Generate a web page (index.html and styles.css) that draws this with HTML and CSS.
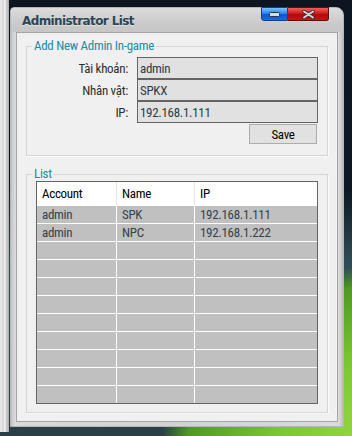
FILE: index.html
```html
<!DOCTYPE html>
<html lang="vi">
<head>
    <meta charset="UTF-8">
    <meta name="viewport" content="width=device-width, initial-scale=1.0">
    <title>Administrator List</title>
    <link rel="stylesheet" href="styles.css">
</head>
<body>
    <div class="desktop">
        <div class="otherwin"></div>

        <div class="window">
            <div class="titlebar">
                <span class="title">Administrator List</span>
                <div class="caption-btns">
                    <span class="cbtn min">
                        <svg width="11" height="5" viewBox="0 0 11 5"><rect x="0.5" y="0.5" width="10" height="4" rx="1" fill="#d8dde4" stroke="#28344a"/></svg>
                    </span>
                    <span class="cbtn close">
                        <svg width="13" height="9" viewBox="0 0 13 9">
                            <path d="M2 1.5 L11 7.5 M11 1.5 L2 7.5" stroke="#3a2a2a" stroke-width="3.6" stroke-linecap="round"/>
                            <path d="M2 1.5 L11 7.5 M11 1.5 L2 7.5" stroke="#d6d6d6" stroke-width="2" stroke-linecap="round"/>
                        </svg>
                    </span>
                </div>
            </div>

            <div class="client">
                <!-- Form them admin -->
                <fieldset class="group add-group">
                    <legend>Add New Admin In-game</legend>
                    <div class="form-grid">
                        <label for="account">Tài khoản:</label>
                        <input type="text" id="account" value="admin">
                        <label for="character">Nhân vật:</label>
                        <input type="text" id="character" value="SPKX">
                        <label for="ip">IP:</label>
                        <input type="text" id="ip" value="192.168.1.111">
                    </div>
                    <div class="actions">
                        <button type="button" class="save-btn">Save</button>
                    </div>
                </fieldset>

                <!-- Danh sach admin -->
                <fieldset class="group list-group">
                    <legend>List</legend>
                    <table class="admin-table">
                        <colgroup>
                            <col class="col-account">
                            <col class="col-name">
                            <col class="col-ip">
                        </colgroup>
                        <thead>
                            <tr>
                                <th>Account</th>
                                <th>Name</th>
                                <th>IP</th>
                            </tr>
                        </thead>
                        <tbody>
                            <tr><td>admin</td><td>SPK</td><td>192.168.1.111</td></tr>
                            <tr><td>admin</td><td>NPC</td><td>192.168.1.222</td></tr>
                            <tr><td>&nbsp;</td><td>&nbsp;</td><td>&nbsp;</td></tr>
                            <tr><td>&nbsp;</td><td>&nbsp;</td><td>&nbsp;</td></tr>
                            <tr><td>&nbsp;</td><td>&nbsp;</td><td>&nbsp;</td></tr>
                            <tr><td>&nbsp;</td><td>&nbsp;</td><td>&nbsp;</td></tr>
                            <tr><td>&nbsp;</td><td>&nbsp;</td><td>&nbsp;</td></tr>
                            <tr><td>&nbsp;</td><td>&nbsp;</td><td>&nbsp;</td></tr>
                            <tr><td>&nbsp;</td><td>&nbsp;</td><td>&nbsp;</td></tr>
                            <tr><td>&nbsp;</td><td>&nbsp;</td><td>&nbsp;</td></tr>
                            <tr><td>&nbsp;</td><td>&nbsp;</td><td>&nbsp;</td></tr>
                        </tbody>
                    </table>
                </fieldset>
            </div>
        </div>
    </div>
</body>
</html>
```

FILE: styles.css
```css
/* nen desktop */
body {
    margin: 0;
    font-family: Roboto, "Liberation Sans", sans-serif;
    font-stretch: 75%;
    font-size: 13px;
    letter-spacing: -0.3px;
}

.desktop {
    display: flex;
    align-items: flex-start;
    width: 352px;
    height: 436px;
    overflow: hidden;
    background:
        radial-gradient(ellipse 260px 200px at 420px 460px, #a6e24c 0, #7cc832 55%, #4e9a22 90%, rgba(60, 120, 40, 0) 100%),
        linear-gradient(#0c1520 0, #0d1722 190px, #2f4c56 262px, #2a3f47 100%);
}

/* cua so khac phia sau */
.otherwin {
    width: 9px;
    height: 432px;
    background: linear-gradient(to right, #e6e6e6 0, #e6e6e6 2px, #cfcfcf 3px, #f6f6f6 5px, #b4b4b4 7px, #d2d2d2 8px, #8c8c8c 9px);
}

/* cua so chinh */
.window {
    display: flex;
    flex-direction: column;
    box-sizing: border-box;
    width: 334px;
    height: 420px;
    margin: 7px 0 0 1px;
    border: 1px solid #b6b6b6;
    border-radius: 4px 8px 0 0;
    background: linear-gradient(to right, #c4c4c4, #dadada 4px, #d2d2d2 50%, #dadada calc(100% - 4px), #bdbdbd);
}

.titlebar {
    display: flex;
    align-items: center;
    height: 24px;
    padding-left: 11px;
    border-radius: 3px 7px 0 0;
    background: linear-gradient(#dcdcdc, #cbcbcb 60%, #c6c6c6);
}

.title {
    flex: 1;
    font-family: "DejaVu Sans", sans-serif;
    font-stretch: normal;
    font-weight: bold;
    font-size: 12px;
    letter-spacing: -0.6px;
    color: #2a4656;
    text-shadow: 0 1px 0 rgba(255, 255, 255, 0.45);
    padding-top: 1px;
}

.caption-btns {
    display: flex;
    align-self: flex-start;
    margin: -1px 14px 0 0;
}

.cbtn {
    display: flex;
    align-items: center;
    justify-content: center;
    box-sizing: border-box;
    height: 14px;
    border: 1px solid #40282a;
}

.cbtn.min {
    width: 27px;
    border-color: #1c3c86;
    border-radius: 0 0 0 3px;
    background: linear-gradient(#7cc4ff, #2a86f4 45%, #0a56d6 55%, #1a6ae0);
}

.cbtn.close {
    width: 41px;
    border-left: none;
    border-color: #5a1010;
    border-radius: 0 0 3px 0;
    background: linear-gradient(#f06060, #d21c1c 45%, #b00a0a 55%, #c81414);
}

.client {
    flex: 1;
    display: flex;
    flex-direction: column;
    margin: 0 5px 4px;
    padding-top: 6px;
    border: 1px solid #a4a4a4;
    background: #f0f0f0;
}

/* group box */
.group {
    width: 302px;
    box-sizing: border-box;
    margin: 0 0 0 9px;
    padding: 0;
    border: 1px solid #d4d4d4;
    box-shadow: 1px 1px 0 #fbfbfb;
}

.group legend {
    margin-left: 5px;
    padding: 0 2px;
    line-height: 14px;
    color: #1d8aa2;
}

.add-group {
    padding: 4px 0 11px;
}

.form-grid {
    display: grid;
    grid-template-columns: 110px 181px;
    align-items: center;
}

.form-grid label {
    text-align: right;
    padding-right: 9px;
    color: #2e2e2e;
}

.form-grid input {
    box-sizing: border-box;
    width: 181px;
    height: 22px;
    margin: 0;
    padding: 0 2px;
    border: 1px solid #646464;
    background: #e1e1e1;
    font: inherit;
    letter-spacing: inherit;
    color: #2f3b45;
    outline: none;
}

.actions {
    display: flex;
    justify-content: flex-end;
    margin-top: 1px;
    padding-right: 10px;
}

.save-btn {
    width: 68px;
    height: 20px;
    padding: 0;
    border: 1px solid #adadad;
    background: #e1e1e1;
    font: inherit;
    letter-spacing: inherit;
    color: #000;
}

.list-group {
    margin-top: 11px;
    padding: 0 0 8px;
}

/* bang danh sach */
.admin-table {
    width: 282px;
    margin-left: 9px;
    table-layout: fixed;
    border-collapse: separate;
    border-spacing: 0;
    border: 1px solid #646464;
}

.col-account { width: 80px; }
.col-name { width: 78px; }
.col-ip { width: 122px; }

.admin-table th {
    padding: 0 0 0 5px;
    line-height: 24px;
    font-weight: normal;
    text-align: left;
    color: #000;
    background: #fff;
    border-right: 1px solid #e4e4e4;
}

.admin-table td {
    padding: 0 0 0 5px;
    line-height: 17px;
    color: #33424c;
    background: #c0c0c0;
    border-right: 1px solid #fff;
    border-bottom: 1px solid #fff;
}

.admin-table th:last-child,
.admin-table td:last-child {
    border-right: none;
}

.admin-table tr:last-child td {
    border-bottom: none;
}
```
